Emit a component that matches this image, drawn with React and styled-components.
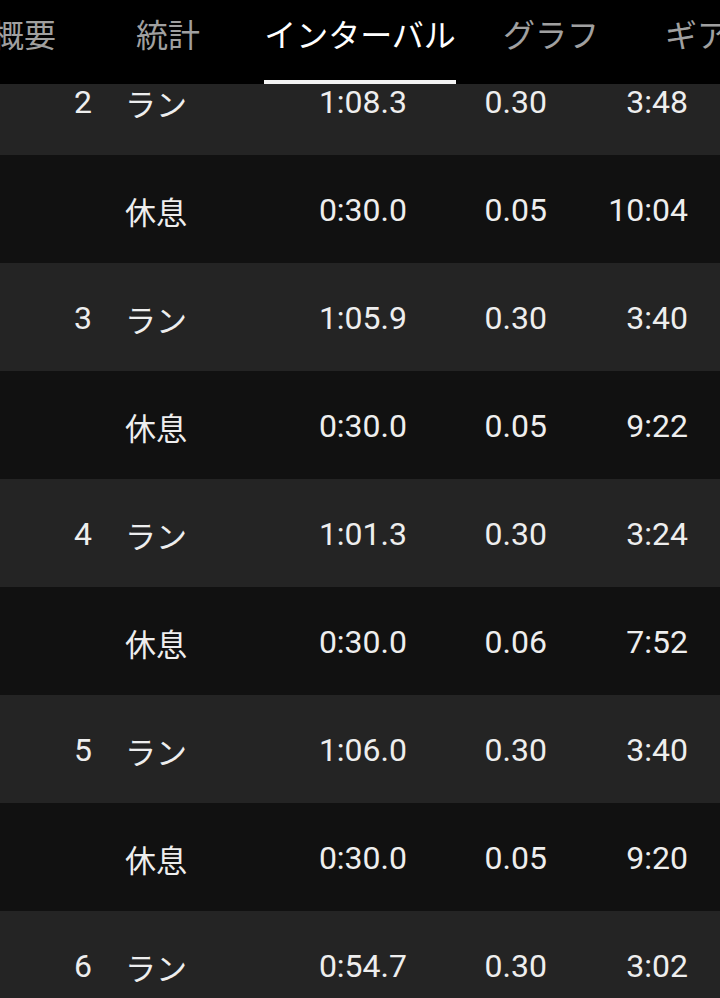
import React from 'react';
import styled, { createGlobalStyle } from 'styled-components';

const GlobalStyle = createGlobalStyle`
  html, body {
    margin: 0;
    padding: 0;
    background: #111111;
  }
  body {
    font-family: Roboto, "Noto Sans CJK JP", sans-serif;
  }
`;

const Screen = styled.div`
  width: 720px;
  height: 998px;
  overflow: hidden;
  background: #111111;
`;

const TabBar = styled.div`
  position: relative;
  z-index: 1;
  height: 84px;
  background: #000000;
  display: flex;
  overflow: hidden;
`;

const TabStrip = styled.div`
  display: flex;
  margin-left: -48px;
  flex-shrink: 0;
`;

const Tab = styled.div`
  width: ${props => props.width}px;
  flex-shrink: 0;
  display: flex;
  flex-direction: column;
  align-items: center;
  justify-content: space-between;
  font-size: 32px;
  color: ${props => (props.active ? '#ffffff' : '#a0a0a0')};
`;

const TabLabel = styled.span`
  display: block;
  line-height: 1;
  margin-top: 20px;
  white-space: nowrap;
`;

const Indicator = styled.div`
  width: 192px;
  height: 4px;
  background: ${props => (props.active ? '#f2f2f2' : 'transparent')};
`;

const List = styled.div`
  margin-top: -37px;
`;

const Row = styled.div`
  height: 108px;
  box-sizing: border-box;
  padding-top: 2px;
  display: grid;
  grid-template-columns: 92px 188px 127px 140px 141px;
  align-items: center;
  padding-right: 32px;
  background: ${props => (props.rest ? '#111111' : '#242424')};
  color: #eeeeee;
  font-size: 32px;
  line-height: 1;
`;

const Num = styled.span`
  text-align: right;
`;

const Kind = styled.span`
  padding-left: 33px;
  font-family: "Noto Sans CJK JP", sans-serif;
  font-size: 31px;
`;

const Cell = styled.span`
  text-align: right;
`;

const tabs = [
  { label: '概要', width: 144 },
  { label: '統計', width: 144 },
  { label: 'インターバル', width: 240, active: true },
  { label: 'グラフ', width: 142 },
  { label: 'ギア', width: 150 },
];

const rows = [
  { n: '2', kind: 'ラン', time: '1:08.3', dist: '0.30', pace: '3:48' },
  { kind: '休息', time: '0:30.0', dist: '0.05', pace: '10:04', rest: true },
  { n: '3', kind: 'ラン', time: '1:05.9', dist: '0.30', pace: '3:40' },
  { kind: '休息', time: '0:30.0', dist: '0.05', pace: '9:22', rest: true },
  { n: '4', kind: 'ラン', time: '1:01.3', dist: '0.30', pace: '3:24' },
  { kind: '休息', time: '0:30.0', dist: '0.06', pace: '7:52', rest: true },
  { n: '5', kind: 'ラン', time: '1:06.0', dist: '0.30', pace: '3:40' },
  { kind: '休息', time: '0:30.0', dist: '0.05', pace: '9:20', rest: true },
  { n: '6', kind: 'ラン', time: '0:54.7', dist: '0.30', pace: '3:02' },
  { kind: '休息', time: '0:30.0', dist: '0.05', pace: '9:41', rest: true },
];

const App = () => (
  <Screen>
    <GlobalStyle />
    <TabBar>
      <TabStrip>
        {tabs.map(t => (
          <Tab key={t.label} width={t.width} active={t.active}>
            <TabLabel>{t.label}</TabLabel>
            <Indicator active={t.active} />
          </Tab>
        ))}
      </TabStrip>
    </TabBar>
    <List>
      {rows.map((r, i) => (
        <Row key={i} rest={r.rest}>
          <Num>{r.n}</Num>
          <Kind>{r.kind}</Kind>
          <Cell>{r.time}</Cell>
          <Cell>{r.dist}</Cell>
          <Cell>{r.pace}</Cell>
        </Row>
      ))}
    </List>
  </Screen>
);

export default App;
